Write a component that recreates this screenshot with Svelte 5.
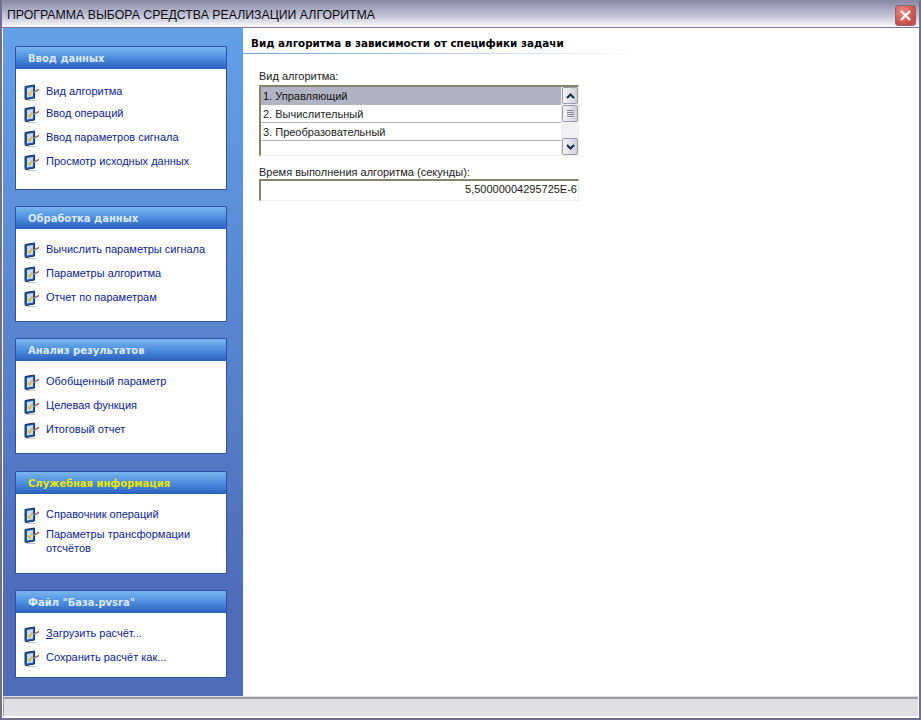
<script>
  const panels = [
    {
      title: "Ввод данных",
      cls: "p1",
      items: [
        { label: "Вид алгоритма" },
        { label: "Ввод операций", tight: true },
        { label: "Ввод параметров сигнала" },
        { label: "Просмотр исходных данных" },
      ],
    },
    {
      title: "Обработка данных",
      cls: "p2",
      items: [
        { label: "Вычислить параметры сигнала" },
        { label: "Параметры алгоритма" },
        { label: "Отчет по параметрам" },
      ],
    },
    {
      title: "Анализ результатов",
      cls: "p2",
      items: [
        { label: "Обобщенный параметр" },
        { label: "Целевая функция" },
        { label: "Итоговый отчет" },
      ],
    },
    {
      title: "Служебная информация",
      cls: "p4",
      active: true,
      items: [
        { label: "Справочник операций" },
        { label: "Параметры трансформации отсчётов", two: true },
      ],
    },
    {
      title: 'Файл "База.pvsra"',
      cls: "p5",
      items: [
        { label: "агрузить расчёт...", mnemonic: "З" },
        { label: "Сохранить расчёт как..." },
      ],
    },
  ];

  const rows = ["1. Управляющий", "2. Вычислительный", "3. Преобразовательный"];
</script>

<div class="window">
  <header class="titlebar">
    <span class="title">ПРОГРАММА ВЫБОРА СРЕДСТВА РЕАЛИЗАЦИИ АЛГОРИТМА</span>
    <button class="close" aria-label="Закрыть">
      <svg width="13" height="13" viewBox="0 0 13 13">
        <path d="M2 2 L11 11 M11 2 L2 11" stroke="#fff" stroke-width="2.4" fill="none" />
      </svg>
    </button>
  </header>

  <div class="body">
    <aside class="sidebar">
      {#each panels as panel}
        <section class="panel {panel.cls}">
          <h2 class:active={panel.active}>{panel.title}</h2>
          <ul>
            {#each panel.items as item}
              <li class:tight={item.tight} class:two={item.two}>
                <svg class="icon" width="16" height="17" viewBox="0 0 16 17">
                  <path d="M1 2.5 L10.5 1 V14 L2 15.5 Q1 15.5 1 14.5 Z" fill="#1d5aa6" stroke="#1b3560" stroke-width="1" />
                  <path d="M3 4 L9 3 V12.5 L3 13.5 Z" fill="#c9dcf5" />
                  <path d="M4 8.5 L5.6 11 L8.6 5.5" stroke="#e6b52e" stroke-width="1.5" fill="none" />
                  <path d="M9 8.5 L13 6.5" stroke="#6d7c98" stroke-width="1.6" />
                  <path d="M13 6.5 L15 5.5" stroke="#c8504c" stroke-width="1.6" />
                  <path d="M3 16.5 H11" stroke="#b9c2cf" stroke-width="1" />
                </svg>
                <a href="#top">{#if item.mnemonic}<u>{item.mnemonic}</u>{/if}{item.label}</a>
              </li>
            {/each}
          </ul>
        </section>
      {/each}
    </aside>

    <main class="content">
      <h1>Вид алгоритма в зависимости от специфики задачи</h1>
      <div class="form">
        <div class="field-label">Вид алгоритма:</div>
        <div class="listbox">
          <div class="rows">
            {#each rows as row, i}
              <div class="row" class:selected={i === 0}>{row}</div>
            {/each}
          </div>
          <div class="scrollbar">
            <div class="sb-btn">
              <svg width="9" height="6" viewBox="0 0 9 6"><path d="M1 5 L4.5 1.5 L8 5" stroke="#1d2a44" stroke-width="2" fill="none" /></svg>
            </div>
            <div class="sb-thumb"><i></i><i></i><i></i><i></i></div>
            <div class="sb-track"></div>
            <div class="sb-btn">
              <svg width="9" height="6" viewBox="0 0 9 6"><path d="M1 1 L4.5 4.5 L8 1" stroke="#1d2a44" stroke-width="2" fill="none" /></svg>
            </div>
          </div>
        </div>
        <div class="field-label second">Время выполнения алгоритма (секунды):</div>
        <div class="value">5,50000004295725E-6</div>
      </div>
    </main>
  </div>

  <footer class="statusbar"></footer>
</div>

<style>
  :global(body) {
    margin: 0;
    background: #fff;
  }

  .window {
    box-sizing: border-box;
    width: 921px;
    height: 720px;
    display: flex;
    flex-direction: column;
    background: #fff;
    border: 2px solid #6f6f92;
    border-top: 1px solid #8a8aa4;
    padding: 0 1px 2px;
    font-family: "Liberation Sans", Arial, sans-serif;
    font-size: 11px;
    color: #111;
  }

  .titlebar {
    height: 26px;
    margin: 0 -1px;
    padding: 0 3px 0 5px;
    display: flex;
    align-items: center;
    justify-content: space-between;
    background: linear-gradient(#8a8aa6 0, #a3a3bc 25%, #c6c6d8 60%, #eeeef3 90%, #fafafc 100%);
    border-bottom: 1px solid #77779a;
  }

  .title {
    font-size: 12.3px;
    color: #0b0b16;
    padding-top: 2px;
  }

  .close {
    width: 21px;
    height: 21px;
    padding: 0;
    margin-top: 2px;
    display: flex;
    align-items: center;
    justify-content: center;
    background: radial-gradient(circle at 35% 30%, #e98a7c, #c64a45 75%);
    border: 1px solid #8a6a70;
    border-radius: 3px;
  }

  .body {
    flex: 1;
    display: flex;
    min-height: 0;
  }

  .sidebar {
    width: 240px;
    flex: none;
    box-sizing: border-box;
    padding: 18px 16px 0 12px;
    background: linear-gradient(#62a0e8, #4f6cb9 85%);
    display: flex;
    flex-direction: column;
    gap: 16px;
  }

  .panel {
    background: #fff;
    border: 1px solid #2f4fa8;
    border-top: 0;
    border-radius: 2px 2px 0 0;
    box-sizing: border-box;
  }

  .p1 { height: 144px; }
  .p2 { height: 116px; }
  .p4 { height: 103px; margin-top: 1px; }
  .p5 { height: 88px; }

  .p1 ul { padding-top: 14px; }

  h2 {
    margin: 0 -1px;
    height: 23px;
    padding-left: 12px;
    box-sizing: border-box;
    line-height: 23px;
    font-family: "DejaVu Sans", sans-serif;
    font-size: 10px;
    font-weight: 700;
    color: #dbe8fa;
    background: linear-gradient(#79b6f0, #4c8ede 50%, #2c5fbb);
    border: 1px solid #2f4fa8;
    border-bottom: 0;
    border-radius: 2px 2px 0 0;
  }

  h2.active {
    color: #e6e600;
  }

  ul {
    list-style: none;
    margin: 0;
    padding: 12px 8px 0 8px;
  }

  li {
    display: flex;
    align-items: flex-start;
    gap: 6px;
    height: 24px;
    line-height: 14px;
  }

  li.tight {
    margin-top: -2px;
  }

  li.two {
    margin-top: -4px;
    height: 28px;
  }

  .icon {
    flex: none;
    margin-top: 1px;
  }

  a {
    color: #0c1c96;
    text-decoration: none;
    padding-top: 1px;
  }

  .content {
    flex: 1;
    min-width: 0;
  }

  h1 {
    margin: 0;
    height: 26px;
    padding: 9px 0 0 8px;
    box-sizing: border-box;
    font-family: "DejaVu Sans", sans-serif;
    font-size: 10.35px;
    font-weight: 700;
    color: #000;
    border-bottom: 1px solid transparent;
    border-image: linear-gradient(90deg, #6a9ee6, #fff 60%) 1;
  }

  .form {
    width: 320px;
    margin-left: 16px;
    padding-top: 15px;
  }

  .field-label {
    height: 16px;
    line-height: 14px;
    color: #222;
  }

  .field-label.second {
    height: 13px;
    margin-top: 9px;
  }

  .listbox {
    display: flex;
    height: 71px;
    box-sizing: border-box;
    border-top: 2px solid #86836f;
    border-left: 2px solid #86836f;
    border-right: 1px solid #f1efe2;
    border-bottom: 1px solid #f1efe2;
  }

  .rows {
    flex: 1;
    background: #fff;
  }

  .row {
    height: 18px;
    box-sizing: border-box;
    padding-left: 2px;
    line-height: 19px;
    border-bottom: 1px solid #b5b5b5;
    color: #222;
  }

  .row.selected {
    background: #b0b3c2;
    color: #111;
  }

  .scrollbar {
    width: 17px;
    flex: none;
    display: flex;
    flex-direction: column;
    background: #f1f1f5;
    border-left: 1px solid #ececf0;
    box-sizing: border-box;
  }

  .sb-btn, .sb-thumb {
    box-sizing: border-box;
    margin: 0;
    width: 16px;
    height: 17px;
    background: linear-gradient(90deg, #f4f4f8, #cfcfdb);
    border: 1px solid #9a9aac;
    border-radius: 2px;
    display: flex;
    align-items: center;
    justify-content: center;
  }

  .sb-thumb {
    flex-direction: column;
    gap: 1px;
    margin-top: 1px;
  }

  .sb-thumb i {
    display: block;
    width: 7px;
    height: 1px;
    background: #8a8a9e;
  }

  .sb-track {
    flex: 1;
  }

  .value {
    height: 22px;
    box-sizing: border-box;
    text-align: right;
    line-height: 17px;
    padding-right: 1px;
    color: #222;
    background: #fff;
    border-top: 2px solid #86836f;
    border-left: 2px solid #86836f;
    border-right: 1px solid #f1efe2;
    border-bottom: 1px solid #f1efe2;
    margin-top: 1px;
  }

  .statusbar {
    height: 17px;
    flex: none;
    background: #e0dfe4;
    border-top: 2px solid #9e9eaa;
    border-left: 1px solid #9e9eaa;
    box-shadow: 0 -1px 0 #dcdce0;
  }
</style>
